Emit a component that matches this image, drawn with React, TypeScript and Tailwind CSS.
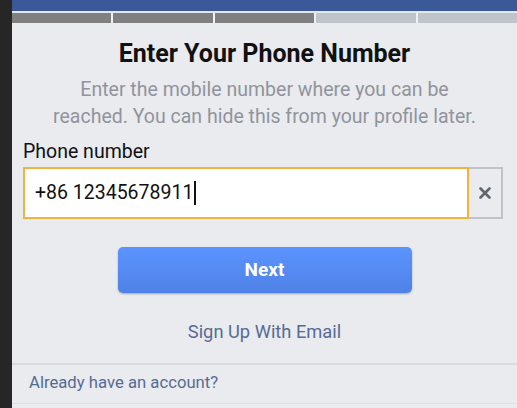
import React from "react";

export default function App() {
  return (
    <div className="flex h-[408px] w-full overflow-hidden" style={{ fontFamily: "Roboto, 'Noto Sans', sans-serif" }}>
      <div className="w-[12px] shrink-0 bg-[#262626]" />
      <div className="flex flex-1 flex-col bg-[#e9ebee]">
        <div className="h-[11px] bg-[#3b5998]" />
        <div className="h-[2px] bg-[#e4e7ee]" />
        <div className="flex h-[10px] gap-[2px] bg-[#eef0f3]">
          <div className="flex-1 bg-[#808080]" />
          <div className="flex-1 bg-[#808080]" />
          <div className="flex-1 bg-[#808080]" />
          <div className="flex-1 bg-[#bfc3ca]" />
          <div className="flex-1 bg-[#bfc3ca]" />
        </div>
        <div className="flex flex-col px-[11px]">
          <h1 className="mt-[17px] text-center text-[25px] font-bold leading-[28px] text-[#111]">
            Enter Your Phone Number
          </h1>
          <p className="mt-[8px] text-center text-[19.5px] leading-[27px] text-[#90949c]">
            Enter the mobile number where you can be
            <br />
            reached. You can hide this from your profile later.
          </p>
          <label className="mt-[11px] text-[19.5px] leading-[22px] text-[#111]">Phone number</label>
          <div className="mr-[3px] mt-[4px] flex h-[52px]">
            <div className="flex flex-1 items-center border-2 border-[#efb43c] bg-white pl-[10px] text-[19.5px] text-[#111]">
              <span>+86 12345678911</span>
              <span className="ml-[1px] h-[24px] w-[1.5px] bg-[#111]" />
            </div>
            <div className="flex w-[34px] items-center justify-center border-2 border-l-0 border-[#bec3c9] bg-[#e9ebee]">
              <svg width="12" height="12" viewBox="0 0 12 12">
                <path d="M1.5 1.5 L10.5 10.5 M10.5 1.5 L1.5 10.5" stroke="#606770" strokeWidth="2.6" strokeLinecap="round" />
              </svg>
            </div>
          </div>
          <div className="mt-[28px] flex justify-center">
            <button className="flex h-[46px] w-[294px] items-center justify-center rounded-[5px] bg-gradient-to-b from-[#5b93ff] to-[#4f82e6] text-[19px] font-bold text-white shadow-[0_1px_2px_rgba(0,0,0,0.3)]">
              Next
            </button>
          </div>
          <div className="mt-[28px] text-center text-[18.3px] leading-[22px] text-[#576b95]">Sign Up With Email</div>
        </div>
        <div className="mt-[20px] border-t-2 border-[#d6d9de] pl-[17px] pt-[7px] text-[16.7px] leading-[22px] text-[#576b95]">
          Already have an account?
        </div>
        <div className="mt-[9px] border-t border-[#dcdee3]" />
      </div>
    </div>
  );
}
